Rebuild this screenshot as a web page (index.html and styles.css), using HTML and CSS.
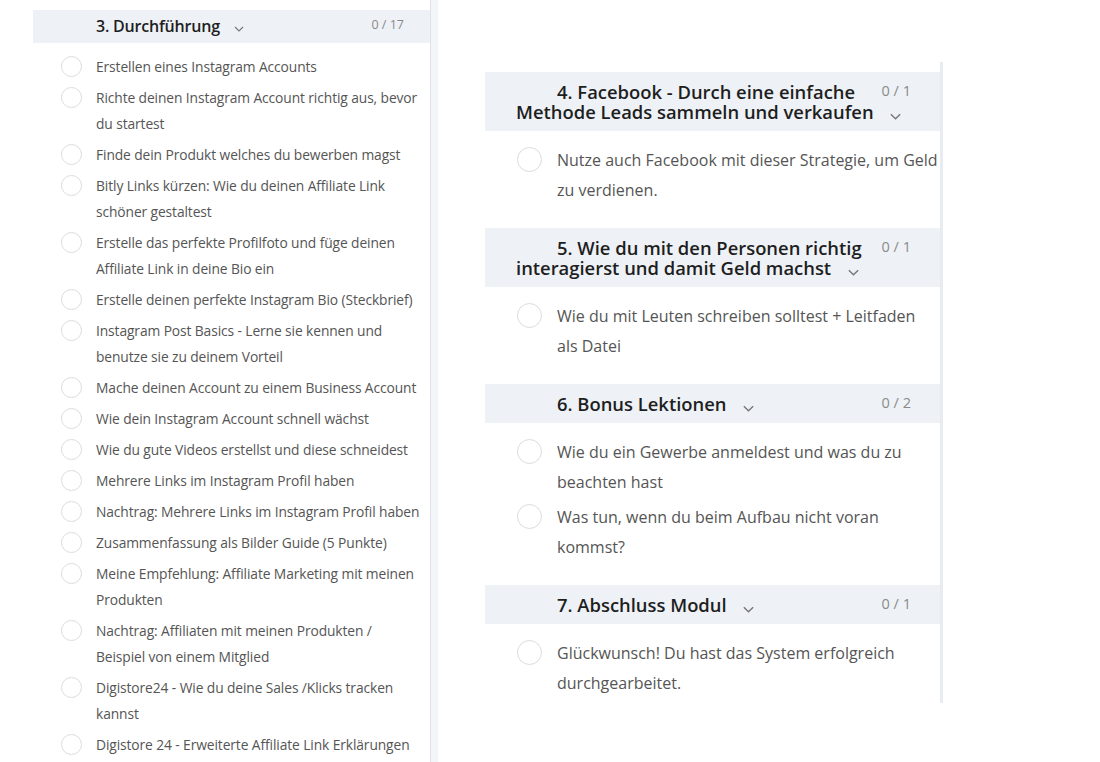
FILE: index.html
```html
<!DOCTYPE html>
<html lang="de">
<head>
    <meta charset="UTF-8">
    <title>Kursinhalt</title>
    <link rel="stylesheet" href="styles.css">
</head>
<body>
    <div class="page">
        <!-- Linke Spalte: Modul 3 -->
        <section class="module module-small">
            <div class="module-head">
                <span class="module-count">0 / 17</span>
                <div class="module-title">3. Durchführung <svg class="chevron" viewBox="0 0 10 6"><polyline points="1,1 5,5 9,1"/></svg></div>
            </div>
            <ul class="lessons">
                <li><span class="check"></span><span>Erstellen eines Instagram Accounts</span></li>
                <li><span class="check"></span><span>Richte deinen Instagram Account richtig aus, bevor du startest</span></li>
                <li><span class="check"></span><span>Finde dein Produkt welches du bewerben magst</span></li>
                <li><span class="check"></span><span>Bitly Links kürzen: Wie du deinen Affiliate Link schöner gestaltest</span></li>
                <li><span class="check"></span><span>Erstelle das perfekte Profilfoto und füge deinen Affiliate Link in deine Bio ein</span></li>
                <li><span class="check"></span><span>Erstelle deinen perfekte Instagram Bio (Steckbrief)</span></li>
                <li><span class="check"></span><span>Instagram Post Basics - Lerne sie kennen und benutze sie zu deinem Vorteil</span></li>
                <li><span class="check"></span><span>Mache deinen Account zu einem Business Account</span></li>
                <li><span class="check"></span><span>Wie dein Instagram Account schnell wächst</span></li>
                <li><span class="check"></span><span>Wie du gute Videos erstellst und diese schneidest</span></li>
                <li><span class="check"></span><span>Mehrere Links im Instagram Profil haben</span></li>
                <li><span class="check"></span><span>Nachtrag: Mehrere Links im Instagram Profil haben</span></li>
                <li><span class="check"></span><span>Zusammenfassung als Bilder Guide (5 Punkte)</span></li>
                <li><span class="check"></span><span>Meine Empfehlung: Affiliate Marketing mit meinen Produkten</span></li>
                <li><span class="check"></span><span>Nachtrag: Affiliaten mit meinen Produkten / Beispiel von einem Mitglied</span></li>
                <li><span class="check"></span><span>Digistore24 - Wie du deine Sales /Klicks tracken kannst</span></li>
                <li><span class="check"></span><span>Digistore 24 - Erweiterte Affiliate Link Erklärungen</span></li>
            </ul>
        </section>

        <!-- Rechte Spalte: Module 4 bis 7 -->
        <section class="module module-large">
            <div class="module-head">
                <span class="module-count">0 / 1</span>
                <div class="module-title">4. Facebook - Durch eine einfache Methode Leads sammeln und verkaufen <svg class="chevron" viewBox="0 0 10 6"><polyline points="1,1 5,5 9,1"/></svg></div>
            </div>
            <ul class="lessons">
                <li><span class="check"></span><span>Nutze auch Facebook mit dieser Strategie, um Geld zu verdienen.</span></li>
            </ul>

            <div class="module-head">
                <span class="module-count">0 / 1</span>
                <div class="module-title">5. Wie du mit den Personen richtig interagierst und damit Geld machst <svg class="chevron" viewBox="0 0 10 6"><polyline points="1,1 5,5 9,1"/></svg></div>
            </div>
            <ul class="lessons">
                <li><span class="check"></span><span>Wie du mit Leuten schreiben solltest + Leitfaden als Datei</span></li>
            </ul>

            <div class="module-head">
                <span class="module-count">0 / 2</span>
                <div class="module-title">6. Bonus Lektionen <svg class="chevron" viewBox="0 0 10 6"><polyline points="1,1 5,5 9,1"/></svg></div>
            </div>
            <ul class="lessons">
                <li><span class="check"></span><span>Wie du ein Gewerbe anmeldest und was du zu beachten hast</span></li>
                <li><span class="check"></span><span>Was tun, wenn du beim Aufbau nicht voran kommst?</span></li>
            </ul>

            <div class="module-head">
                <span class="module-count">0 / 1</span>
                <div class="module-title">7. Abschluss Modul <svg class="chevron" viewBox="0 0 10 6"><polyline points="1,1 5,5 9,1"/></svg></div>
            </div>
            <ul class="lessons">
                <li><span class="check"></span><span>Glückwunsch! Du hast das System erfolgreich durchgearbeitet.</span></li>
            </ul>
        </section>
    </div>
</body>
</html>
```

FILE: styles.css
```css
body {
    font-family: "Open Sans", Lato, sans-serif;
    background-color: #fff;
    color: #555;
    margin: 0;
    padding: 0;
}

.page {
    display: flex;
    align-items: flex-start;
    padding-left: 33px;
    gap: 54px;
}

.module {
    background-color: #fff;
}

.module-head {
    background-color: #eef2f7;
}

.module-head::after {
    content: "";
    display: block;
    clear: both;
}

/* Zähler rechts oben, der Titel fließt darum herum */
.module-count {
    float: right;
    color: #8a8a8a;
    white-space: nowrap;
}

.module-title {
    color: #1e1e1e;
    font-weight: 600;
    text-indent: 41px;
}

.chevron {
    fill: none;
    stroke: #777;
    stroke-width: 1.2;
}

.lessons {
    list-style: none;
    margin: 0;
}

.lessons li {
    display: flex;
}

.check {
    flex: none;
    border: 1.5px solid #dcdcdc;
    border-radius: 50%;
    box-sizing: border-box;
}

/* linke Spalte */
.module-small {
    width: 397px;
    height: 762px;
    border-right: 1px solid #dfe3e8;
    box-shadow: 7px 0 0 #f3f5f8;
}

.module-small .module-head {
    margin-top: 10px;
    padding: 7px 26px 8px 22px;
}

.module-small .module-title {
    font-size: 16px;
    letter-spacing: -0.2px;
    line-height: 18px;
}

.module-small .chevron {
    width: 10px;
    height: 6px;
    margin-left: 10px;
    vertical-align: 0;
}

.module-small .module-count {
    font-size: 12.5px;
    line-height: 16px;
    margin-left: 16px;
}

.module-small .lessons {
    padding: 11px 0 0 28px;
}

.module-small .lessons li {
    font-size: 13.8px;
    letter-spacing: -0.1px;
    line-height: 26px;
    margin-bottom: 5px;
    padding-right: 8px;
}

.module-small .check {
    width: 21px;
    height: 21px;
    margin: 2px 14px 0 0;
}

/* rechte Spalte */
.module-large {
    width: 455px;
    margin-top: 62px;
    padding-top: 10px;
    border-right: 3px solid #e8ebef;
}

.module-large .module-head {
    padding: 10px 29px 9px 31px;
}

.module-large .module-title {
    font-size: 18.4px;
    line-height: 20px;
}

.module-large .chevron {
    width: 13px;
    height: 7px;
    margin-left: 11px;
    vertical-align: -1px;
}

.module-large .module-count {
    font-size: 14.5px;
    line-height: 16px;
    margin: 1px 0 0 16px;
}

.module-large .lessons {
    padding: 14px 0 18px 32px;
}

.module-large .lessons:last-child {
    padding-bottom: 0;
}

.module-large .lessons li {
    font-size: 16px;
    line-height: 30px;
    margin-bottom: 5px;
}

.module-large .check {
    width: 25px;
    height: 25px;
    margin: 2px 15px 0 0;
}
```
